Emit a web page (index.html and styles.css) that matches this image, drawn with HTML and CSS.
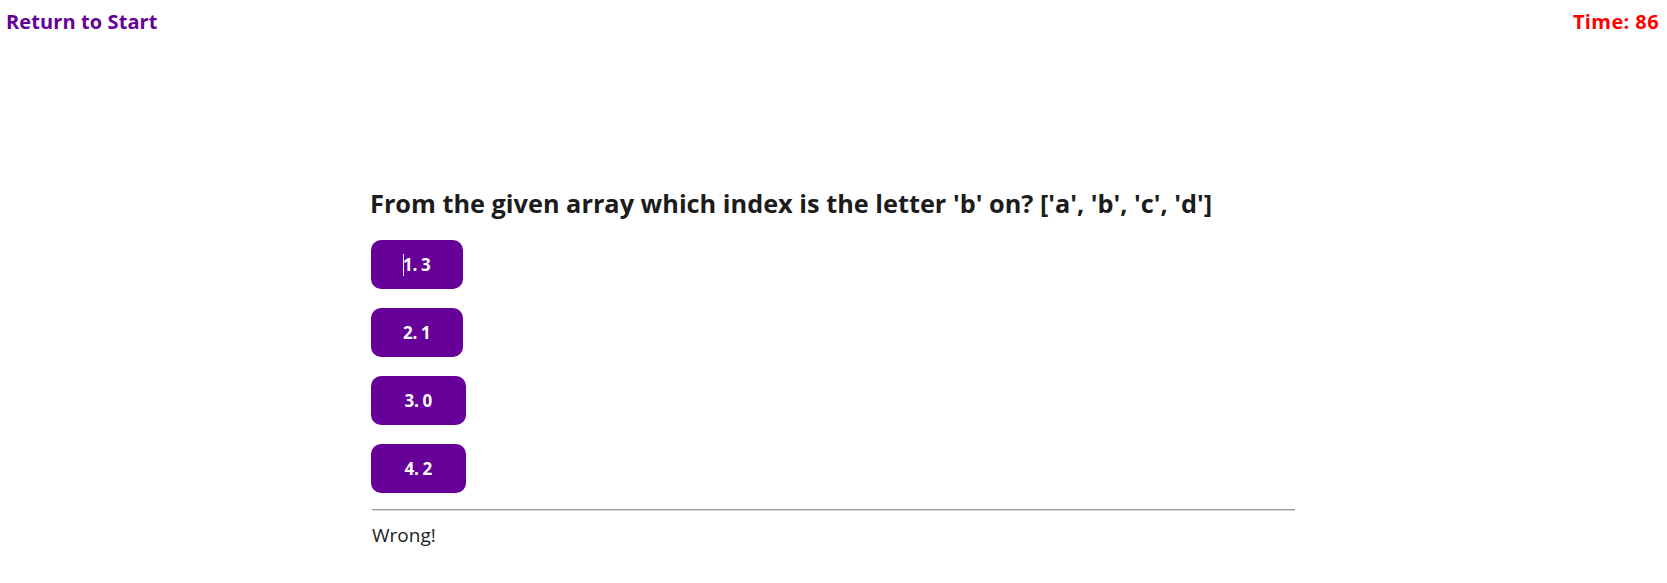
FILE: index.html
```html
<!DOCTYPE html>
<html lang="en">
<head>
<meta charset="utf-8">
<title>Quiz</title>
<link rel="stylesheet" href="styles.css">
</head>
<body>
<header class="topbar">
  <a class="return-link" href="#">Return to Start</a>
  <span class="timer">Time: 86</span>
</header>
<main class="quiz">
  <h2 class="question">From the given array which index is the letter 'b' on? ['a', 'b', 'c', 'd']</h2>
  <div class="choices">
    <button class="choice"><span class="caret"></span>1. 3</button>
    <button class="choice">2. 1</button>
    <button class="choice choice-wide">3. 0</button>
    <button class="choice choice-wide">4. 2</button>
  </div>
  <hr class="divider">
  <p class="feedback">Wrong!</p>
</main>
</body>
</html>
```
FILE: styles.css
```css
html, body {
  margin: 0;
  padding: 0;
  background: #ffffff;
}

body {
  font-family: "Open Sans", "Noto Sans", sans-serif;
  color: #1a1a1a;
}

.topbar {
  display: flex;
  justify-content: space-between;
  align-items: flex-start;
  padding: 8px 8px 0 6px;
  font-size: 20px;
  font-weight: 700;
  line-height: 27px;
}

.return-link {
  color: #660099;
  text-decoration: none;
  letter-spacing: 0.1px;
}

.timer {
  color: #ff0000;
  letter-spacing: 0.4px;
}

.quiz {
  width: 923px;
  margin: 151px auto 0 auto;
  display: flex;
  flex-direction: column;
}

.question {
  margin: 0 0 0 -2px;
  font-size: 25.3px;
  font-weight: 700;
  line-height: 34px;
  color: #1c1c1c;
}

.choices {
  display: flex;
  flex-direction: column;
  align-items: flex-start;
  gap: 19px;
  margin-top: 20px;
  margin-left: -1px;
}

.choice {
  display: inline-flex;
  align-items: center;
  justify-content: center;
  height: 49px;
  padding: 0 32px;
  border: none;
  border-radius: 10px;
  background: #660099;
  color: #ffffff;
  font-family: "Open Sans", "Noto Sans", sans-serif;
  font-size: 17px;
  font-weight: 700;
  letter-spacing: -0.3px;
  cursor: pointer;
}

.choice-wide {
  padding: 0 33.5px;
}

.caret {
  display: inline-block;
  width: 1px;
  height: 22px;
  background: #ffffff;
  margin-right: -1px;
}

.divider {
  width: 100%;
  margin: 16px 0 0 0;
  border: none;
  border-top: 1px solid #9a9a9a;
  border-bottom: 1px solid #d8d8d8;
}

.feedback {
  margin: 11px 0 0 0;
  font-size: 19px;
  line-height: 26px;
  font-weight: 400;
  color: #222222;
}
```
